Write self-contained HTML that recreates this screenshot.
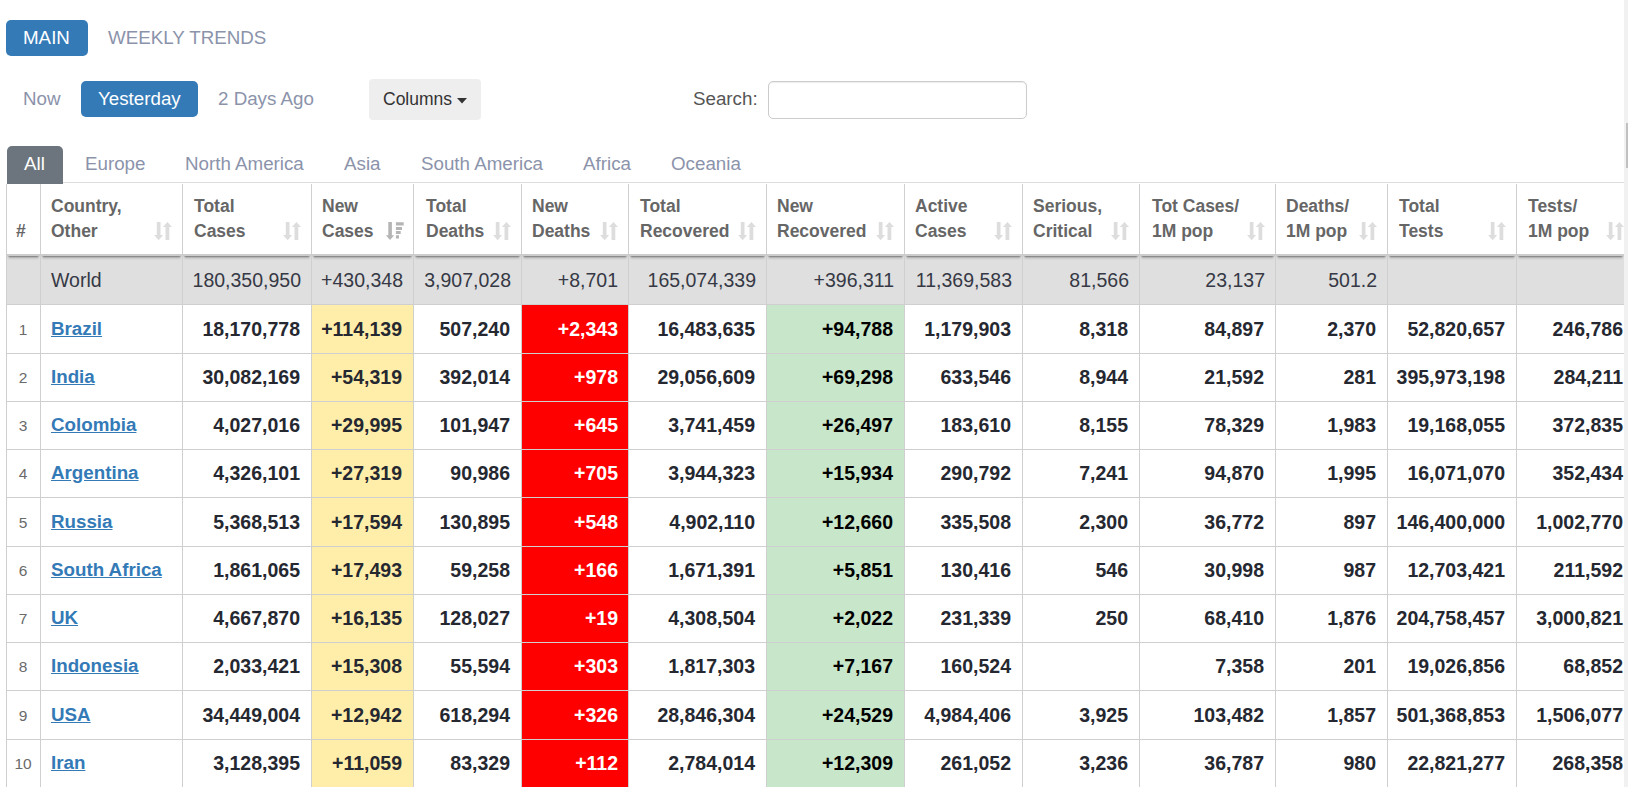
<!DOCTYPE html>
<html><head><meta charset="utf-8"><title>COVID table</title>
<style>
html,body{margin:0;padding:0;background:#fff;overflow:hidden;}
body{width:1628px;height:787px;position:relative;font-family:"Liberation Sans", sans-serif;}
.a{position:absolute;white-space:nowrap;}
.btn{position:absolute;border-radius:5px;box-sizing:border-box;}
.tx{position:absolute;white-space:nowrap;line-height:1;}
.vl{position:absolute;width:1px;background:#cfcfcf;}
.hl{position:absolute;height:1px;background:#cfcfcf;}
.c{position:absolute;box-sizing:border-box;}
.num{position:absolute;white-space:nowrap;line-height:1;font-weight:bold;font-size:19.5px;color:#252830;text-align:right;}
.hd{position:absolute;white-space:nowrap;line-height:1;font-weight:bold;font-size:17.5px;color:#666;}
</style></head><body>

<div class="btn" style="left:6px;top:20px;width:82px;height:36px;background:#337ab7;"></div>
<div class="tx" style="left:23px;top:29px;font-size:18.75px;color:#fff;">MAIN</div>
<div class="tx" style="left:108px;top:29px;font-size:18.75px;color:#8b93ab;">WEEKLY TRENDS</div>
<div class="tx" style="left:23px;top:90px;font-size:18.75px;color:#8b93ab;">Now</div>
<div class="btn" style="left:81px;top:81px;width:117px;height:36px;background:#337ab7;"></div>
<div class="tx" style="left:98px;top:90px;font-size:18.75px;color:#fff;">Yesterday</div>
<div class="tx" style="left:218px;top:90px;font-size:18.75px;color:#8b93ab;">2 Days Ago</div>
<div class="btn" style="left:369px;top:79px;width:112px;height:41px;background:#eeeeee;border-radius:4px;"></div>
<div class="tx" style="left:383px;top:91px;font-size:17.5px;color:#333;">Columns</div>
<svg class="a" style="left:457px;top:98px;" width="10" height="6"><path d="M0 0H10L5 5.5Z" fill="#333"/></svg>
<div class="tx" style="left:693px;top:90px;font-size:18.75px;color:#555;">Search:</div>
<div class="a" style="left:768px;top:81px;width:259px;height:38px;box-sizing:border-box;border:1px solid #cccccc;border-radius:5px;box-shadow:inset 0 1px 1px rgba(0,0,0,.075);"></div>
<div class="a" style="left:7px;top:146px;width:56px;height:38px;background:#6c757d;border-radius:5px 5px 0 0;"></div>
<div class="tx" style="left:24px;top:155px;font-size:18.75px;color:#fff;">All</div>
<div class="tx" style="left:85px;top:155px;font-size:18.75px;color:#8b93ab;">Europe</div>
<div class="tx" style="left:185px;top:155px;font-size:18.75px;color:#8b93ab;">North America</div>
<div class="tx" style="left:344px;top:155px;font-size:18.75px;color:#8b93ab;">Asia</div>
<div class="tx" style="left:421px;top:155px;font-size:18.75px;color:#8b93ab;">South America</div>
<div class="tx" style="left:583px;top:155px;font-size:18.75px;color:#8b93ab;">Africa</div>
<div class="tx" style="left:671px;top:155px;font-size:18.75px;color:#8b93ab;">Oceania</div>
<div class="hl" style="left:63px;top:182px;width:1561px;background:#dddddd;"></div>
<div class="c" style="left:6px;top:256px;width:1618px;height:48px;background:#dfdfdf;"></div>
<div class="c" style="left:6px;top:254px;width:1618px;height:2px;background:#cccccc;"></div>
<div class="c" style="left:312px;top:305px;width:101px;height:48px;background:#ffeeaa;"></div>
<div class="c" style="left:522px;top:305px;width:106px;height:48px;background:#ff0000;"></div>
<div class="c" style="left:767px;top:305px;width:137px;height:48px;background:#c8e6c9;"></div>
<div class="c" style="left:312px;top:354px;width:101px;height:47px;background:#ffeeaa;"></div>
<div class="c" style="left:522px;top:354px;width:106px;height:47px;background:#ff0000;"></div>
<div class="c" style="left:767px;top:354px;width:137px;height:47px;background:#c8e6c9;"></div>
<div class="c" style="left:312px;top:402px;width:101px;height:47px;background:#ffeeaa;"></div>
<div class="c" style="left:522px;top:402px;width:106px;height:47px;background:#ff0000;"></div>
<div class="c" style="left:767px;top:402px;width:137px;height:47px;background:#c8e6c9;"></div>
<div class="c" style="left:312px;top:450px;width:101px;height:47px;background:#ffeeaa;"></div>
<div class="c" style="left:522px;top:450px;width:106px;height:47px;background:#ff0000;"></div>
<div class="c" style="left:767px;top:450px;width:137px;height:47px;background:#c8e6c9;"></div>
<div class="c" style="left:312px;top:498px;width:101px;height:48px;background:#ffeeaa;"></div>
<div class="c" style="left:522px;top:498px;width:106px;height:48px;background:#ff0000;"></div>
<div class="c" style="left:767px;top:498px;width:137px;height:48px;background:#c8e6c9;"></div>
<div class="c" style="left:312px;top:547px;width:101px;height:47px;background:#ffeeaa;"></div>
<div class="c" style="left:522px;top:547px;width:106px;height:47px;background:#ff0000;"></div>
<div class="c" style="left:767px;top:547px;width:137px;height:47px;background:#c8e6c9;"></div>
<div class="c" style="left:312px;top:595px;width:101px;height:47px;background:#ffeeaa;"></div>
<div class="c" style="left:522px;top:595px;width:106px;height:47px;background:#ff0000;"></div>
<div class="c" style="left:767px;top:595px;width:137px;height:47px;background:#c8e6c9;"></div>
<div class="c" style="left:312px;top:643px;width:101px;height:47px;background:#ffeeaa;"></div>
<div class="c" style="left:522px;top:643px;width:106px;height:47px;background:#ff0000;"></div>
<div class="c" style="left:767px;top:643px;width:137px;height:47px;background:#c8e6c9;"></div>
<div class="c" style="left:312px;top:691px;width:101px;height:48px;background:#ffeeaa;"></div>
<div class="c" style="left:522px;top:691px;width:106px;height:48px;background:#ff0000;"></div>
<div class="c" style="left:767px;top:691px;width:137px;height:48px;background:#c8e6c9;"></div>
<div class="c" style="left:312px;top:740px;width:101px;height:47px;background:#ffeeaa;"></div>
<div class="c" style="left:522px;top:740px;width:106px;height:47px;background:#ff0000;"></div>
<div class="c" style="left:767px;top:740px;width:137px;height:47px;background:#c8e6c9;"></div>
<div class="c" style="left:7px;top:256px;width:33px;height:4px;background:linear-gradient(#8a8a8a 0,#8a8a8a 1px,#b5b5b5 1px,#b5b5b5 2px,#cdcdcd 2px,#cdcdcd 3px,#d8d8d8 3px,#d8d8d8 4px);-webkit-mask-image:linear-gradient(90deg,transparent 0,#000 3px,#000 calc(100% - 3px),transparent 100%);"></div>
<div class="c" style="left:41px;top:256px;width:141px;height:4px;background:linear-gradient(#8a8a8a 0,#8a8a8a 1px,#b5b5b5 1px,#b5b5b5 2px,#cdcdcd 2px,#cdcdcd 3px,#d8d8d8 3px,#d8d8d8 4px);-webkit-mask-image:linear-gradient(90deg,transparent 0,#000 3px,#000 calc(100% - 3px),transparent 100%);"></div>
<div class="c" style="left:183px;top:256px;width:128px;height:4px;background:linear-gradient(#8a8a8a 0,#8a8a8a 1px,#b5b5b5 1px,#b5b5b5 2px,#cdcdcd 2px,#cdcdcd 3px,#d8d8d8 3px,#d8d8d8 4px);-webkit-mask-image:linear-gradient(90deg,transparent 0,#000 3px,#000 calc(100% - 3px),transparent 100%);"></div>
<div class="c" style="left:312px;top:256px;width:101px;height:4px;background:linear-gradient(#8a8a8a 0,#8a8a8a 1px,#b5b5b5 1px,#b5b5b5 2px,#cdcdcd 2px,#cdcdcd 3px,#d8d8d8 3px,#d8d8d8 4px);-webkit-mask-image:linear-gradient(90deg,transparent 0,#000 3px,#000 calc(100% - 3px),transparent 100%);"></div>
<div class="c" style="left:414px;top:256px;width:107px;height:4px;background:linear-gradient(#8a8a8a 0,#8a8a8a 1px,#b5b5b5 1px,#b5b5b5 2px,#cdcdcd 2px,#cdcdcd 3px,#d8d8d8 3px,#d8d8d8 4px);-webkit-mask-image:linear-gradient(90deg,transparent 0,#000 3px,#000 calc(100% - 3px),transparent 100%);"></div>
<div class="c" style="left:522px;top:256px;width:106px;height:4px;background:linear-gradient(#8a8a8a 0,#8a8a8a 1px,#b5b5b5 1px,#b5b5b5 2px,#cdcdcd 2px,#cdcdcd 3px,#d8d8d8 3px,#d8d8d8 4px);-webkit-mask-image:linear-gradient(90deg,transparent 0,#000 3px,#000 calc(100% - 3px),transparent 100%);"></div>
<div class="c" style="left:629px;top:256px;width:137px;height:4px;background:linear-gradient(#8a8a8a 0,#8a8a8a 1px,#b5b5b5 1px,#b5b5b5 2px,#cdcdcd 2px,#cdcdcd 3px,#d8d8d8 3px,#d8d8d8 4px);-webkit-mask-image:linear-gradient(90deg,transparent 0,#000 3px,#000 calc(100% - 3px),transparent 100%);"></div>
<div class="c" style="left:767px;top:256px;width:137px;height:4px;background:linear-gradient(#8a8a8a 0,#8a8a8a 1px,#b5b5b5 1px,#b5b5b5 2px,#cdcdcd 2px,#cdcdcd 3px,#d8d8d8 3px,#d8d8d8 4px);-webkit-mask-image:linear-gradient(90deg,transparent 0,#000 3px,#000 calc(100% - 3px),transparent 100%);"></div>
<div class="c" style="left:905px;top:256px;width:117px;height:4px;background:linear-gradient(#8a8a8a 0,#8a8a8a 1px,#b5b5b5 1px,#b5b5b5 2px,#cdcdcd 2px,#cdcdcd 3px,#d8d8d8 3px,#d8d8d8 4px);-webkit-mask-image:linear-gradient(90deg,transparent 0,#000 3px,#000 calc(100% - 3px),transparent 100%);"></div>
<div class="c" style="left:1023px;top:256px;width:116px;height:4px;background:linear-gradient(#8a8a8a 0,#8a8a8a 1px,#b5b5b5 1px,#b5b5b5 2px,#cdcdcd 2px,#cdcdcd 3px,#d8d8d8 3px,#d8d8d8 4px);-webkit-mask-image:linear-gradient(90deg,transparent 0,#000 3px,#000 calc(100% - 3px),transparent 100%);"></div>
<div class="c" style="left:1140px;top:256px;width:135px;height:4px;background:linear-gradient(#8a8a8a 0,#8a8a8a 1px,#b5b5b5 1px,#b5b5b5 2px,#cdcdcd 2px,#cdcdcd 3px,#d8d8d8 3px,#d8d8d8 4px);-webkit-mask-image:linear-gradient(90deg,transparent 0,#000 3px,#000 calc(100% - 3px),transparent 100%);"></div>
<div class="c" style="left:1276px;top:256px;width:111px;height:4px;background:linear-gradient(#8a8a8a 0,#8a8a8a 1px,#b5b5b5 1px,#b5b5b5 2px,#cdcdcd 2px,#cdcdcd 3px,#d8d8d8 3px,#d8d8d8 4px);-webkit-mask-image:linear-gradient(90deg,transparent 0,#000 3px,#000 calc(100% - 3px),transparent 100%);"></div>
<div class="c" style="left:1388px;top:256px;width:128px;height:4px;background:linear-gradient(#8a8a8a 0,#8a8a8a 1px,#b5b5b5 1px,#b5b5b5 2px,#cdcdcd 2px,#cdcdcd 3px,#d8d8d8 3px,#d8d8d8 4px);-webkit-mask-image:linear-gradient(90deg,transparent 0,#000 3px,#000 calc(100% - 3px),transparent 100%);"></div>
<div class="c" style="left:1517px;top:256px;width:107px;height:4px;background:linear-gradient(#8a8a8a 0,#8a8a8a 1px,#b5b5b5 1px,#b5b5b5 2px,#cdcdcd 2px,#cdcdcd 3px,#d8d8d8 3px,#d8d8d8 4px);-webkit-mask-image:linear-gradient(90deg,transparent 0,#000 3px,#000 calc(100% - 3px),transparent 100%);"></div>
<div class="hl" style="left:6px;top:304px;width:1618px;"></div>
<div class="hl" style="left:6px;top:353px;width:1618px;"></div>
<div class="hl" style="left:6px;top:401px;width:1618px;"></div>
<div class="hl" style="left:6px;top:449px;width:1618px;"></div>
<div class="hl" style="left:6px;top:497px;width:1618px;"></div>
<div class="hl" style="left:6px;top:546px;width:1618px;"></div>
<div class="hl" style="left:6px;top:594px;width:1618px;"></div>
<div class="hl" style="left:6px;top:642px;width:1618px;"></div>
<div class="hl" style="left:6px;top:690px;width:1618px;"></div>
<div class="hl" style="left:6px;top:739px;width:1618px;"></div>
<div class="vl" style="left:6px;top:184px;height:603px;"></div>
<div class="vl" style="left:40px;top:184px;height:603px;"></div>
<div class="vl" style="left:182px;top:184px;height:603px;"></div>
<div class="vl" style="left:311px;top:184px;height:603px;"></div>
<div class="vl" style="left:413px;top:184px;height:603px;"></div>
<div class="vl" style="left:521px;top:184px;height:603px;"></div>
<div class="vl" style="left:628px;top:184px;height:603px;"></div>
<div class="vl" style="left:766px;top:184px;height:603px;"></div>
<div class="vl" style="left:904px;top:184px;height:603px;"></div>
<div class="vl" style="left:1022px;top:184px;height:603px;"></div>
<div class="vl" style="left:1139px;top:184px;height:603px;"></div>
<div class="vl" style="left:1275px;top:184px;height:603px;"></div>
<div class="vl" style="left:1387px;top:184px;height:603px;"></div>
<div class="vl" style="left:1516px;top:184px;height:603px;"></div>
<div class="hd" style="left:16px;top:223px;">#</div>
<div class="hd" style="left:51px;top:198px;">Country,</div>
<div class="hd" style="left:51px;top:223px;">Other</div>
<svg class="a" style="left:154px;top:222px;" width="20" height="19" viewBox="0 0 20 19"><path d="M2.8 0H6.5V13H9.1L4.6 18.2L0.1 13H2.8Z" fill="#dddddd"/><path d="M11.5 18H15.3V5H18L13.45 0L8.9 5H11.5Z" fill="#dddddd"/></svg>
<div class="hd" style="left:194px;top:198px;">Total</div>
<div class="hd" style="left:194px;top:223px;">Cases</div>
<svg class="a" style="left:283px;top:222px;" width="20" height="19" viewBox="0 0 20 19"><path d="M2.8 0H6.5V13H9.1L4.6 18.2L0.1 13H2.8Z" fill="#dddddd"/><path d="M11.5 18H15.3V5H18L13.45 0L8.9 5H11.5Z" fill="#dddddd"/></svg>
<div class="hd" style="left:322px;top:198px;">New</div>
<div class="hd" style="left:322px;top:223px;">Cases</div>
<svg class="a" style="left:385px;top:222px;" width="20" height="19" viewBox="0 0 20 19"><path d="M3.3 0H6.9V13.2H9.2L5.05 18L0.9 13.2H3.3Z" fill="#b5b5b5"/><path d="M10.9 0.3H18.7V3.5H10.9ZM10.9 4.9H17V7.9H10.9ZM10.9 9.1H15.7V12H10.9ZM10.9 13.3H14V16.6H10.9Z" fill="#b5b5b5"/></svg>
<div class="hd" style="left:426px;top:198px;">Total</div>
<div class="hd" style="left:426px;top:223px;">Deaths</div>
<svg class="a" style="left:493px;top:222px;" width="20" height="19" viewBox="0 0 20 19"><path d="M2.8 0H6.5V13H9.1L4.6 18.2L0.1 13H2.8Z" fill="#dddddd"/><path d="M11.5 18H15.3V5H18L13.45 0L8.9 5H11.5Z" fill="#dddddd"/></svg>
<div class="hd" style="left:532px;top:198px;">New</div>
<div class="hd" style="left:532px;top:223px;">Deaths</div>
<svg class="a" style="left:600px;top:222px;" width="20" height="19" viewBox="0 0 20 19"><path d="M2.8 0H6.5V13H9.1L4.6 18.2L0.1 13H2.8Z" fill="#dddddd"/><path d="M11.5 18H15.3V5H18L13.45 0L8.9 5H11.5Z" fill="#dddddd"/></svg>
<div class="hd" style="left:640px;top:198px;">Total</div>
<div class="hd" style="left:640px;top:223px;">Recovered</div>
<svg class="a" style="left:738px;top:222px;" width="20" height="19" viewBox="0 0 20 19"><path d="M2.8 0H6.5V13H9.1L4.6 18.2L0.1 13H2.8Z" fill="#dddddd"/><path d="M11.5 18H15.3V5H18L13.45 0L8.9 5H11.5Z" fill="#dddddd"/></svg>
<div class="hd" style="left:777px;top:198px;">New</div>
<div class="hd" style="left:777px;top:223px;">Recovered</div>
<svg class="a" style="left:876px;top:222px;" width="20" height="19" viewBox="0 0 20 19"><path d="M2.8 0H6.5V13H9.1L4.6 18.2L0.1 13H2.8Z" fill="#dddddd"/><path d="M11.5 18H15.3V5H18L13.45 0L8.9 5H11.5Z" fill="#dddddd"/></svg>
<div class="hd" style="left:915px;top:198px;">Active</div>
<div class="hd" style="left:915px;top:223px;">Cases</div>
<svg class="a" style="left:994px;top:222px;" width="20" height="19" viewBox="0 0 20 19"><path d="M2.8 0H6.5V13H9.1L4.6 18.2L0.1 13H2.8Z" fill="#dddddd"/><path d="M11.5 18H15.3V5H18L13.45 0L8.9 5H11.5Z" fill="#dddddd"/></svg>
<div class="hd" style="left:1033px;top:198px;">Serious,</div>
<div class="hd" style="left:1033px;top:223px;">Critical</div>
<svg class="a" style="left:1111px;top:222px;" width="20" height="19" viewBox="0 0 20 19"><path d="M2.8 0H6.5V13H9.1L4.6 18.2L0.1 13H2.8Z" fill="#dddddd"/><path d="M11.5 18H15.3V5H18L13.45 0L8.9 5H11.5Z" fill="#dddddd"/></svg>
<div class="hd" style="left:1152px;top:198px;">Tot&nbsp;Cases/</div>
<div class="hd" style="left:1152px;top:223px;">1M pop</div>
<svg class="a" style="left:1247px;top:222px;" width="20" height="19" viewBox="0 0 20 19"><path d="M2.8 0H6.5V13H9.1L4.6 18.2L0.1 13H2.8Z" fill="#dddddd"/><path d="M11.5 18H15.3V5H18L13.45 0L8.9 5H11.5Z" fill="#dddddd"/></svg>
<div class="hd" style="left:1286px;top:198px;">Deaths/</div>
<div class="hd" style="left:1286px;top:223px;">1M pop</div>
<svg class="a" style="left:1359px;top:222px;" width="20" height="19" viewBox="0 0 20 19"><path d="M2.8 0H6.5V13H9.1L4.6 18.2L0.1 13H2.8Z" fill="#dddddd"/><path d="M11.5 18H15.3V5H18L13.45 0L8.9 5H11.5Z" fill="#dddddd"/></svg>
<div class="hd" style="left:1399px;top:198px;">Total</div>
<div class="hd" style="left:1399px;top:223px;">Tests</div>
<svg class="a" style="left:1488px;top:222px;" width="20" height="19" viewBox="0 0 20 19"><path d="M2.8 0H6.5V13H9.1L4.6 18.2L0.1 13H2.8Z" fill="#dddddd"/><path d="M11.5 18H15.3V5H18L13.45 0L8.9 5H11.5Z" fill="#dddddd"/></svg>
<div class="hd" style="left:1528px;top:198px;">Tests/</div>
<div class="hd" style="left:1528px;top:223px;">1M pop</div>
<svg class="a" style="left:1606px;top:222px;" width="20" height="19" viewBox="0 0 20 19"><path d="M2.8 0H6.5V13H9.1L4.6 18.2L0.1 13H2.8Z" fill="#dddddd"/><path d="M11.5 18H15.3V5H18L13.45 0L8.9 5H11.5Z" fill="#dddddd"/></svg>
<div class="tx" style="left:51px;top:271px;font-size:19.5px;color:#363945;">World</div>
<div class="tx" style="right:1327px;top:271px;font-size:19.5px;color:#363945;">180,350,950</div>
<div class="tx" style="right:1225px;top:271px;font-size:19.5px;color:#363945;">+430,348</div>
<div class="tx" style="right:1117px;top:271px;font-size:19.5px;color:#363945;">3,907,028</div>
<div class="tx" style="right:1010px;top:271px;font-size:19.5px;color:#363945;">+8,701</div>
<div class="tx" style="right:872px;top:271px;font-size:19.5px;color:#363945;">165,074,339</div>
<div class="tx" style="right:734px;top:271px;font-size:19.5px;color:#363945;">+396,311</div>
<div class="tx" style="right:616px;top:271px;font-size:19.5px;color:#363945;">11,369,583</div>
<div class="tx" style="right:499px;top:271px;font-size:19.5px;color:#363945;">81,566</div>
<div class="tx" style="right:363px;top:271px;font-size:19.5px;color:#363945;">23,137</div>
<div class="tx" style="right:251px;top:271px;font-size:19.5px;color:#363945;">501.2</div>
<div class="tx" style="left:6px;top:322px;font-size:15.5px;color:#6a6a6a;width:34px;text-align:center;">1</div>
<div class="tx" style="left:51px;top:320px;font-size:18.75px;font-weight:bold;color:#337ab7;text-decoration:underline;">Brazil</div>
<div class="num" style="right:1328px;top:320px;color:#252830;">18,170,778</div>
<div class="num" style="right:1226px;top:320px;color:#252830;">+114,139</div>
<div class="num" style="right:1118px;top:320px;color:#252830;">507,240</div>
<div class="num" style="right:1010px;top:320px;color:#fff;">+2,343</div>
<div class="num" style="right:873px;top:320px;color:#252830;">16,483,635</div>
<div class="num" style="right:735px;top:320px;color:#000;">+94,788</div>
<div class="num" style="right:617px;top:320px;color:#252830;">1,179,903</div>
<div class="num" style="right:500px;top:320px;color:#252830;">8,318</div>
<div class="num" style="right:364px;top:320px;color:#252830;">84,897</div>
<div class="num" style="right:252px;top:320px;color:#252830;">2,370</div>
<div class="num" style="right:123px;top:320px;color:#252830;">52,820,657</div>
<div class="num" style="right:5px;top:320px;color:#252830;">246,786</div>
<div class="tx" style="left:6px;top:370px;font-size:15.5px;color:#6a6a6a;width:34px;text-align:center;">2</div>
<div class="tx" style="left:51px;top:368px;font-size:18.75px;font-weight:bold;color:#337ab7;text-decoration:underline;">India</div>
<div class="num" style="right:1328px;top:368px;color:#252830;">30,082,169</div>
<div class="num" style="right:1226px;top:368px;color:#252830;">+54,319</div>
<div class="num" style="right:1118px;top:368px;color:#252830;">392,014</div>
<div class="num" style="right:1010px;top:368px;color:#fff;">+978</div>
<div class="num" style="right:873px;top:368px;color:#252830;">29,056,609</div>
<div class="num" style="right:735px;top:368px;color:#000;">+69,298</div>
<div class="num" style="right:617px;top:368px;color:#252830;">633,546</div>
<div class="num" style="right:500px;top:368px;color:#252830;">8,944</div>
<div class="num" style="right:364px;top:368px;color:#252830;">21,592</div>
<div class="num" style="right:252px;top:368px;color:#252830;">281</div>
<div class="num" style="right:123px;top:368px;color:#252830;">395,973,198</div>
<div class="num" style="right:5px;top:368px;color:#252830;">284,211</div>
<div class="tx" style="left:6px;top:418px;font-size:15.5px;color:#6a6a6a;width:34px;text-align:center;">3</div>
<div class="tx" style="left:51px;top:416px;font-size:18.75px;font-weight:bold;color:#337ab7;text-decoration:underline;">Colombia</div>
<div class="num" style="right:1328px;top:416px;color:#252830;">4,027,016</div>
<div class="num" style="right:1226px;top:416px;color:#252830;">+29,995</div>
<div class="num" style="right:1118px;top:416px;color:#252830;">101,947</div>
<div class="num" style="right:1010px;top:416px;color:#fff;">+645</div>
<div class="num" style="right:873px;top:416px;color:#252830;">3,741,459</div>
<div class="num" style="right:735px;top:416px;color:#000;">+26,497</div>
<div class="num" style="right:617px;top:416px;color:#252830;">183,610</div>
<div class="num" style="right:500px;top:416px;color:#252830;">8,155</div>
<div class="num" style="right:364px;top:416px;color:#252830;">78,329</div>
<div class="num" style="right:252px;top:416px;color:#252830;">1,983</div>
<div class="num" style="right:123px;top:416px;color:#252830;">19,168,055</div>
<div class="num" style="right:5px;top:416px;color:#252830;">372,835</div>
<div class="tx" style="left:6px;top:466px;font-size:15.5px;color:#6a6a6a;width:34px;text-align:center;">4</div>
<div class="tx" style="left:51px;top:464px;font-size:18.75px;font-weight:bold;color:#337ab7;text-decoration:underline;">Argentina</div>
<div class="num" style="right:1328px;top:464px;color:#252830;">4,326,101</div>
<div class="num" style="right:1226px;top:464px;color:#252830;">+27,319</div>
<div class="num" style="right:1118px;top:464px;color:#252830;">90,986</div>
<div class="num" style="right:1010px;top:464px;color:#fff;">+705</div>
<div class="num" style="right:873px;top:464px;color:#252830;">3,944,323</div>
<div class="num" style="right:735px;top:464px;color:#000;">+15,934</div>
<div class="num" style="right:617px;top:464px;color:#252830;">290,792</div>
<div class="num" style="right:500px;top:464px;color:#252830;">7,241</div>
<div class="num" style="right:364px;top:464px;color:#252830;">94,870</div>
<div class="num" style="right:252px;top:464px;color:#252830;">1,995</div>
<div class="num" style="right:123px;top:464px;color:#252830;">16,071,070</div>
<div class="num" style="right:5px;top:464px;color:#252830;">352,434</div>
<div class="tx" style="left:6px;top:515px;font-size:15.5px;color:#6a6a6a;width:34px;text-align:center;">5</div>
<div class="tx" style="left:51px;top:513px;font-size:18.75px;font-weight:bold;color:#337ab7;text-decoration:underline;">Russia</div>
<div class="num" style="right:1328px;top:513px;color:#252830;">5,368,513</div>
<div class="num" style="right:1226px;top:513px;color:#252830;">+17,594</div>
<div class="num" style="right:1118px;top:513px;color:#252830;">130,895</div>
<div class="num" style="right:1010px;top:513px;color:#fff;">+548</div>
<div class="num" style="right:873px;top:513px;color:#252830;">4,902,110</div>
<div class="num" style="right:735px;top:513px;color:#000;">+12,660</div>
<div class="num" style="right:617px;top:513px;color:#252830;">335,508</div>
<div class="num" style="right:500px;top:513px;color:#252830;">2,300</div>
<div class="num" style="right:364px;top:513px;color:#252830;">36,772</div>
<div class="num" style="right:252px;top:513px;color:#252830;">897</div>
<div class="num" style="right:123px;top:513px;color:#252830;">146,400,000</div>
<div class="num" style="right:5px;top:513px;color:#252830;">1,002,770</div>
<div class="tx" style="left:6px;top:563px;font-size:15.5px;color:#6a6a6a;width:34px;text-align:center;">6</div>
<div class="tx" style="left:51px;top:561px;font-size:18.75px;font-weight:bold;color:#337ab7;text-decoration:underline;">South Africa</div>
<div class="num" style="right:1328px;top:561px;color:#252830;">1,861,065</div>
<div class="num" style="right:1226px;top:561px;color:#252830;">+17,493</div>
<div class="num" style="right:1118px;top:561px;color:#252830;">59,258</div>
<div class="num" style="right:1010px;top:561px;color:#fff;">+166</div>
<div class="num" style="right:873px;top:561px;color:#252830;">1,671,391</div>
<div class="num" style="right:735px;top:561px;color:#000;">+5,851</div>
<div class="num" style="right:617px;top:561px;color:#252830;">130,416</div>
<div class="num" style="right:500px;top:561px;color:#252830;">546</div>
<div class="num" style="right:364px;top:561px;color:#252830;">30,998</div>
<div class="num" style="right:252px;top:561px;color:#252830;">987</div>
<div class="num" style="right:123px;top:561px;color:#252830;">12,703,421</div>
<div class="num" style="right:5px;top:561px;color:#252830;">211,592</div>
<div class="tx" style="left:6px;top:611px;font-size:15.5px;color:#6a6a6a;width:34px;text-align:center;">7</div>
<div class="tx" style="left:51px;top:609px;font-size:18.75px;font-weight:bold;color:#337ab7;text-decoration:underline;">UK</div>
<div class="num" style="right:1328px;top:609px;color:#252830;">4,667,870</div>
<div class="num" style="right:1226px;top:609px;color:#252830;">+16,135</div>
<div class="num" style="right:1118px;top:609px;color:#252830;">128,027</div>
<div class="num" style="right:1010px;top:609px;color:#fff;">+19</div>
<div class="num" style="right:873px;top:609px;color:#252830;">4,308,504</div>
<div class="num" style="right:735px;top:609px;color:#000;">+2,022</div>
<div class="num" style="right:617px;top:609px;color:#252830;">231,339</div>
<div class="num" style="right:500px;top:609px;color:#252830;">250</div>
<div class="num" style="right:364px;top:609px;color:#252830;">68,410</div>
<div class="num" style="right:252px;top:609px;color:#252830;">1,876</div>
<div class="num" style="right:123px;top:609px;color:#252830;">204,758,457</div>
<div class="num" style="right:5px;top:609px;color:#252830;">3,000,821</div>
<div class="tx" style="left:6px;top:659px;font-size:15.5px;color:#6a6a6a;width:34px;text-align:center;">8</div>
<div class="tx" style="left:51px;top:657px;font-size:18.75px;font-weight:bold;color:#337ab7;text-decoration:underline;">Indonesia</div>
<div class="num" style="right:1328px;top:657px;color:#252830;">2,033,421</div>
<div class="num" style="right:1226px;top:657px;color:#252830;">+15,308</div>
<div class="num" style="right:1118px;top:657px;color:#252830;">55,594</div>
<div class="num" style="right:1010px;top:657px;color:#fff;">+303</div>
<div class="num" style="right:873px;top:657px;color:#252830;">1,817,303</div>
<div class="num" style="right:735px;top:657px;color:#000;">+7,167</div>
<div class="num" style="right:617px;top:657px;color:#252830;">160,524</div>
<div class="num" style="right:364px;top:657px;color:#252830;">7,358</div>
<div class="num" style="right:252px;top:657px;color:#252830;">201</div>
<div class="num" style="right:123px;top:657px;color:#252830;">19,026,856</div>
<div class="num" style="right:5px;top:657px;color:#252830;">68,852</div>
<div class="tx" style="left:6px;top:708px;font-size:15.5px;color:#6a6a6a;width:34px;text-align:center;">9</div>
<div class="tx" style="left:51px;top:706px;font-size:18.75px;font-weight:bold;color:#337ab7;text-decoration:underline;">USA</div>
<div class="num" style="right:1328px;top:706px;color:#252830;">34,449,004</div>
<div class="num" style="right:1226px;top:706px;color:#252830;">+12,942</div>
<div class="num" style="right:1118px;top:706px;color:#252830;">618,294</div>
<div class="num" style="right:1010px;top:706px;color:#fff;">+326</div>
<div class="num" style="right:873px;top:706px;color:#252830;">28,846,304</div>
<div class="num" style="right:735px;top:706px;color:#000;">+24,529</div>
<div class="num" style="right:617px;top:706px;color:#252830;">4,984,406</div>
<div class="num" style="right:500px;top:706px;color:#252830;">3,925</div>
<div class="num" style="right:364px;top:706px;color:#252830;">103,482</div>
<div class="num" style="right:252px;top:706px;color:#252830;">1,857</div>
<div class="num" style="right:123px;top:706px;color:#252830;">501,368,853</div>
<div class="num" style="right:5px;top:706px;color:#252830;">1,506,077</div>
<div class="tx" style="left:6px;top:756px;font-size:15.5px;color:#6a6a6a;width:34px;text-align:center;">10</div>
<div class="tx" style="left:51px;top:754px;font-size:18.75px;font-weight:bold;color:#337ab7;text-decoration:underline;">Iran</div>
<div class="num" style="right:1328px;top:754px;color:#252830;">3,128,395</div>
<div class="num" style="right:1226px;top:754px;color:#252830;">+11,059</div>
<div class="num" style="right:1118px;top:754px;color:#252830;">83,329</div>
<div class="num" style="right:1010px;top:754px;color:#fff;">+112</div>
<div class="num" style="right:873px;top:754px;color:#252830;">2,784,014</div>
<div class="num" style="right:735px;top:754px;color:#000;">+12,309</div>
<div class="num" style="right:617px;top:754px;color:#252830;">261,052</div>
<div class="num" style="right:500px;top:754px;color:#252830;">3,236</div>
<div class="num" style="right:364px;top:754px;color:#252830;">36,787</div>
<div class="num" style="right:252px;top:754px;color:#252830;">980</div>
<div class="num" style="right:123px;top:754px;color:#252830;">22,821,277</div>
<div class="num" style="right:5px;top:754px;color:#252830;">268,358</div>
<div class="a" style="left:1624px;top:0;width:4px;height:787px;background:#f1f1f1;"></div>
<div class="a" style="left:1626px;top:123px;width:2px;height:45px;background:#c1c1c1;"></div>
</body></html>
